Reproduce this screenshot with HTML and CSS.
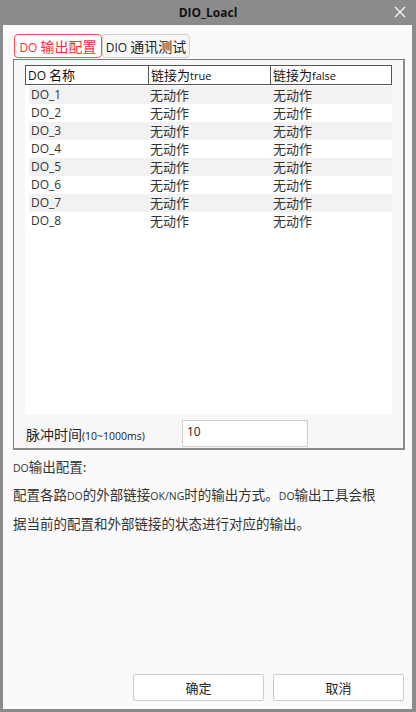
FILE: index.html
```html
<!DOCTYPE html>
<html>
<head>
<meta charset="utf-8">
<link rel="stylesheet" href="styles.css">
</head>
<body>
<div class="window">
  <div class="titlebar">
    <span class="title">DIO_Loacl</span>
    <svg class="close" width="12" height="12" viewBox="0 0 12 12"><path d="M1 1L11 11M11 1L1 11" stroke="#f4f4f4" stroke-width="1.4"/></svg>
  </div>
  <div class="client">
    <div class="tabs">
      <div class="tab active"><span class="tl">DO</span> 输出配置</div>
      <div class="tab"><span class="tl">DIO</span> 通讯测试</div>
    </div>
    <div class="panel">
      <div class="table">
        <div class="thead">
          <div class="th"><span class="tl">DO</span> 名称</div>
          <div class="th">链接为<span class="small">true</span></div>
          <div class="th">链接为<span class="small">false</span></div>
        </div>
        <div class="row odd"><span>DO_1</span><span>无动作</span><span>无动作</span></div>
        <div class="row"><span>DO_2</span><span>无动作</span><span>无动作</span></div>
        <div class="row odd"><span>DO_3</span><span>无动作</span><span>无动作</span></div>
        <div class="row"><span>DO_4</span><span>无动作</span><span>无动作</span></div>
        <div class="row odd"><span>DO_5</span><span>无动作</span><span>无动作</span></div>
        <div class="row"><span>DO_6</span><span>无动作</span><span>无动作</span></div>
        <div class="row odd"><span>DO_7</span><span>无动作</span><span>无动作</span></div>
        <div class="row"><span>DO_8</span><span>无动作</span><span>无动作</span></div>
      </div>
      <div class="pulse">
        <span class="label">脉冲时间<span class="unit">(10~1000ms)</span></span>
        <div class="input">10</div>
      </div>
    </div>
    <div class="desc">
      <p class="head"><span class="lat">DO</span>输出配置:</p>
      <p class="line">配置各路<span class="lat">DO</span>的外部链接<span class="lat">OK/NG</span>时的输出方式。<span class="lat">DO</span>输出工具会根</p>
      <p class="line">据当前的配置和外部链接的状态进行对应的输出。</p>
    </div>
    <div class="buttons">
      <div class="btn">确定</div>
      <div class="btn">取消</div>
    </div>
  </div>
</div>
</body>
</html>
```
FILE: styles.css
```css
* { box-sizing: border-box; }
html, body { margin: 0; padding: 0; }
body {
  width: 416px;
  height: 712px;
  font-family: "Noto Sans", "Noto Sans CJK SC", sans-serif;
  color: #222;
}
.window {
  width: 416px;
  height: 712px;
  background: #8b8b8b;
  display: flex;
  flex-direction: column;
}
.titlebar {
  height: 25px;
  flex: none;
  display: flex;
  align-items: center;
  justify-content: center;
  position: relative;
}
.title {
  font-family: "Open Sans", "Noto Sans CJK SC", sans-serif;
  font-weight: bold;
  font-size: 12px;
  color: #111;
}
.close {
  position: absolute;
  right: 10px;
  top: 6px;
}
.client {
  flex: 1;
  margin: 0 4px 3px 3px;
  background: #fafafa;
  display: flex;
  flex-direction: column;
  padding: 9px 8px 8px 10px;
}
.tabs {
  display: flex;
  height: 25px;
  padding-left: 1px;
}
.tab {
  height: 24px;
  width: 88px;
  text-align: center;
  border: 1px solid #cfcfcf;
  border-radius: 4px;
  font-family: "Noto Sans CJK SC", sans-serif;
  font-size: 14px;
  line-height: 22px;
  color: #222;
  background: #f8f8f8;
  white-space: nowrap;
}
.tab.active {
  border-color: #ff4a5a;
  color: #ff2b3c;
  background: #fff;
}
.tl {
  font-family: "Open Sans", sans-serif;
  font-size: 12px;
}
.panel {
  height: 391px;
  width: 392px;
  border: 1px solid #7c7c7c;
  border-right-width: 2px;
  border-bottom-width: 2px;
  border-right-color: #8a8a8a;
  border-bottom-color: #8a8a8a;
  background: #f7f7f7;
  padding: 5px 11px 0 11px;
  display: flex;
  flex-direction: column;
}
.table {
  height: 352px;
  background: #fff;
  display: flex;
  flex-direction: column;
}
.thead {
  display: grid;
  grid-template-columns: 122px 122px 123px;
  height: 20px;
  border: 1px solid #555;
}
.th {
  font-family: "Noto Sans CJK SC", sans-serif;
  font-size: 13px;
  line-height: 18px;
  padding-left: 2px;
  color: #111;
  border-left: 1px solid #555;
  overflow: hidden;
  white-space: nowrap;
}
.th:first-child { border-left: none; }
.small {
  font-family: "Open Sans", sans-serif;
  font-size: 11px;
}
.row {
  display: grid;
  grid-template-columns: 122px 122px 123px;
  height: 18px;
  margin-left: 4px;
  font-family: "Noto Sans CJK SC", sans-serif;
  font-size: 13px;
  line-height: 18px;
  color: #333;
}
.row.odd { background: #f2f2f2; }
.thead + .row { margin-top: 1px; }
.row span:first-child {
  font-family: "Open Sans", sans-serif;
  font-size: 12px;
  padding-left: 2px;
}
.row span:nth-child(2) { margin-left: -1px; }
.pulse {
  display: flex;
  align-items: center;
  height: 30px;
  margin-top: 3px;
}
.label {
  width: 157px;
  padding-left: 1px;
  font-family: "Noto Sans CJK SC", sans-serif;
  font-size: 14px;
  color: #222;
  padding-top: 1px;
}
.unit {
  font-family: "Open Sans", sans-serif;
  font-size: 10.5px;
}
.input {
  width: 126px;
  height: 27px;
  border: 1px solid #cfcfcf;
  background: #fff;
  font-family: "Open Sans", sans-serif;
  font-size: 12px;
  line-height: 22px;
  padding-left: 4px;
}
.desc {
  font-family: "Noto Sans CJK SC", sans-serif;
  font-size: 13.5px;
  color: #333;
  padding-top: 2px;
}
.desc p {
  margin: 0;
  height: 29px;
  line-height: 29px;
  white-space: nowrap;
}
.desc .head { height: 28px; line-height: 28px; }
.desc .line + .line { margin-top: 0; }
.lat {
  font-family: "Open Sans", sans-serif;
  font-size: 10.5px;
}
.buttons {
  margin-top: auto;
  display: flex;
  justify-content: flex-end;
  gap: 9px;
}
.btn {
  width: 131px;
  height: 27px;
  border: 1px solid #cccccc;
  border-radius: 2px;
  background: #fff;
  font-family: "Noto Sans CJK SC", sans-serif;
  font-size: 13px;
  line-height: 25px;
  text-align: center;
  color: #222;
}
```
